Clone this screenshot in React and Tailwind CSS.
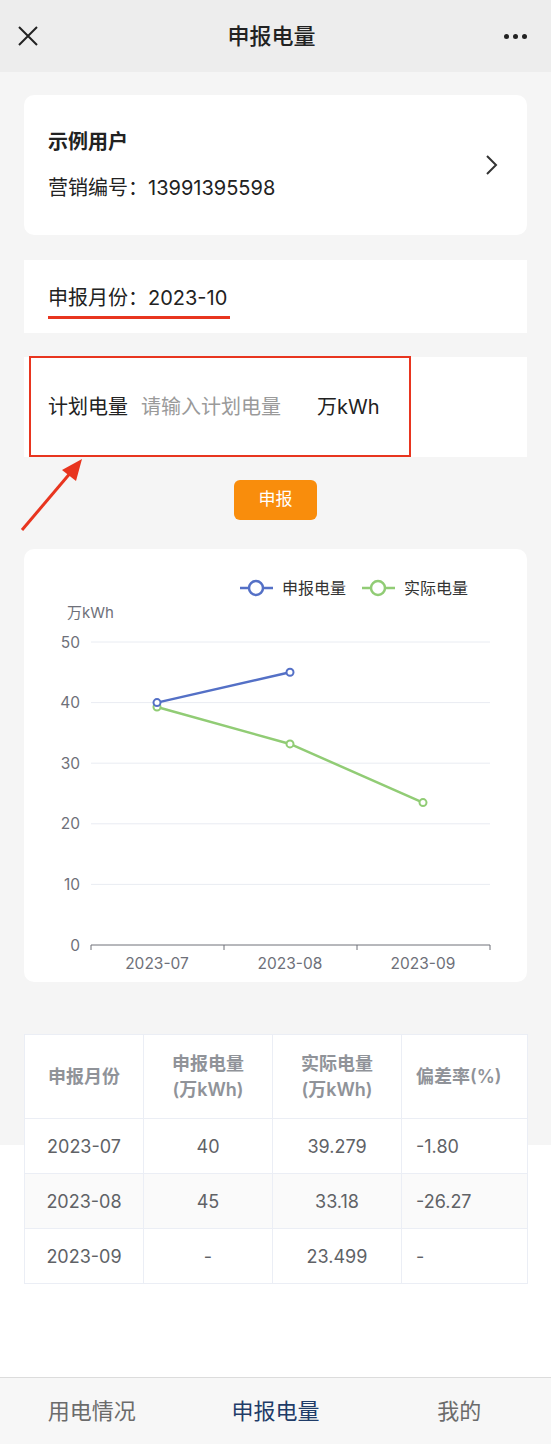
const font = "font-['Inter','Noto_Sans_CJK_SC',sans-serif]";

const rows = [
  { month: '2023-07', plan: '40', real: '39.279', rate: '-1.80' },
  { month: '2023-08', plan: '45', real: '33.18', rate: '-26.27' },
  { month: '2023-09', plan: '-', real: '23.499', rate: '-' },
];

const yOf = (v) => 396 - v * 6.06;
const xs = [133, 266, 399];
const planData = [40, 45];
const realData = [39.279, 33.18, 23.499];

const Chart = () => (
  <svg width="503" height="433" viewBox="0 0 503 433" className="block">
    {/* legend */}
    <line x1="216" y1="39" x2="249" y2="39" stroke="#5470c6" strokeWidth="2.5" />
    <circle cx="232" cy="39" r="7" fill="#fff" stroke="#5470c6" strokeWidth="2.5" />
    <text x="258" y="45" fontSize="16" fill="#333">申报电量</text>
    <line x1="338" y1="39" x2="371" y2="39" stroke="#91cc75" strokeWidth="2.5" />
    <circle cx="354" cy="39" r="7" fill="#fff" stroke="#91cc75" strokeWidth="2.5" />
    <text x="380" y="45" fontSize="16" fill="#333">实际电量</text>

    <text x="43" y="69" fontSize="15" fill="#6e7079">万kWh</text>

    {[50, 40, 30, 20, 10, 0].map((v) => (
      <g key={v}>
        <text x="56" y={yOf(v) + 5.5} fontSize="15.5" fill="#6e7079" textAnchor="end">{v}</text>
        {v > 0 && <line x1="67" y1={yOf(v)} x2="466" y2={yOf(v)} stroke="#e9ecf2" strokeWidth="1" />}
      </g>
    ))}

    <line x1="67" y1="396" x2="466" y2="396" stroke="#6e7079" strokeWidth="1" />
    {[67, 200, 333, 466].map((x) => (
      <line key={x} x1={x} y1="396" x2={x} y2="401" stroke="#6e7079" strokeWidth="1" />
    ))}
    {['2023-07', '2023-08', '2023-09'].map((m, i) => (
      <text key={m} x={xs[i]} y="420" fontSize="15.5" fill="#6e7079" textAnchor="middle">{m}</text>
    ))}

    <polyline points={realData.map((v, i) => `${xs[i]},${yOf(v)}`).join(' ')} fill="none" stroke="#91cc75" strokeWidth="2.5" />
    <polyline points={planData.map((v, i) => `${xs[i]},${yOf(v)}`).join(' ')} fill="none" stroke="#5470c6" strokeWidth="2.5" />
    {realData.map((v, i) => (
      <circle key={'r' + i} cx={xs[i]} cy={yOf(v)} r="3.5" fill="#fff" stroke="#91cc75" strokeWidth="2" />
    ))}
    {planData.map((v, i) => (
      <circle key={'p' + i} cx={xs[i]} cy={yOf(v)} r="3.5" fill="#fff" stroke="#5470c6" strokeWidth="2" />
    ))}
  </svg>
);

const App = () => {
  return (
    <div className={`${font} relative w-[551px] min-h-screen flex flex-col bg-white text-[#222]`}>
      {/* top bar */}
      <div className="h-[72px] bg-[#ededed] flex items-center justify-between pl-[17px] pr-[24px]">
        <svg width="22" height="22" viewBox="0 0 22 22">
          <path d="M2 2L20 20M20 2L2 20" stroke="#222" strokeWidth="2" />
        </svg>
        <span className="text-[22px] font-medium leading-none">申报电量</span>
        <div className="flex gap-[4px]">
          <span className="w-[5px] h-[5px] rounded-full bg-[#222]" />
          <span className="w-[5px] h-[5px] rounded-full bg-[#222]" />
          <span className="w-[5px] h-[5px] rounded-full bg-[#222]" />
        </div>
      </div>

      <div className="flex-1 px-[24px] pt-[23px] pb-[93px] bg-[linear-gradient(to_bottom,#f5f5f5_1073px,#ffffff_1073px)]">
        {/* user card */}
        <div className="h-[140px] bg-white rounded-[10px] pl-[24px] pr-[28px] flex items-center justify-between">
          <div>
            <div className="text-[20px] font-bold leading-[28px]">示例用户</div>
            <div className="text-[20px] leading-[28px] mt-[18px]">营销编号：13991395598</div>
          </div>
          <svg width="14" height="22" viewBox="0 0 14 22">
            <path d="M2 2L11 11L2 20" fill="none" stroke="#333" strokeWidth="2" />
          </svg>
        </div>

        {/* month */}
        <div className="mt-[25px] h-[73px] bg-white pl-[24px] pt-[24px]">
          <span className="inline-block text-[20px] leading-[28px] pb-[4px] pr-[3px] border-b-[3px] border-[#e8351f]">
            申报月份：2023-10
          </span>
        </div>

        {/* plan input */}
        <div className="relative mt-[24px] h-[100px] bg-white pl-[24px] flex items-center text-[20px]">
          <span>计划电量</span>
          <input
            className="ml-[13px] w-[163px] bg-transparent outline-none placeholder:text-[#9a9a9a]"
            placeholder="请输入计划电量"
          />
          <span className="ml-[13px]">万kWh</span>
          <div className="absolute left-[5px] top-[-1px] w-[382px] h-[101px] border-[2px] border-[#e8351f]" />
        </div>

        <div className="mt-[23px] flex justify-center">
          <button className="w-[83px] h-[40px] rounded-[6px] bg-[#f98d0c] text-white text-[17px]">申报</button>
        </div>

        {/* chart */}
        <div className="mt-[29px] bg-white rounded-[10px] h-[433px]">
          <Chart />
        </div>

        {/* table */}
        <div className="mt-[52px] w-[504px] border border-[#ebeef5] bg-white">
          <div className="grid grid-cols-[119px_129px_129px_125px] h-[83px] text-[18px] font-semibold text-[#909399] leading-[26px]">
            <div className="flex items-center justify-center border-r border-[#ebeef5]">申报月份</div>
            <div className="flex flex-col items-center justify-center border-r border-[#ebeef5]">
              <span>申报电量</span>
              <span>(万kWh)</span>
            </div>
            <div className="flex flex-col items-center justify-center border-r border-[#ebeef5]">
              <span>实际电量</span>
              <span>(万kWh)</span>
            </div>
            <div className="flex items-center pl-[14px]">偏差率(%)</div>
          </div>
          {rows.map((r, i) => (
            <div
              key={r.month}
              className={`grid grid-cols-[119px_129px_129px_125px] h-[55px] border-t border-[#ebeef5] text-[18px] text-[#606266] ${i === 1 ? 'bg-[#fafafa]' : 'bg-white'}`}
            >
              <div className="flex items-center justify-center border-r border-[#ebeef5]">{r.month}</div>
              <div className="flex items-center justify-center border-r border-[#ebeef5]">{r.plan}</div>
              <div className="flex items-center justify-center border-r border-[#ebeef5]">{r.real}</div>
              <div className="flex items-center pl-[14px]">{r.rate}</div>
            </div>
          ))}
        </div>
      </div>

      {/* tab bar */}
      <div className="h-[68px] bg-[#f7f7f7] border-t border-[#dcdcdc] grid grid-cols-3 items-center text-center text-[22px]">
        <span className="text-[#6b6b6b]">用电情况</span>
        <span className="text-[#1f3c68]">申报电量</span>
        <span className="text-[#6b6b6b]">我的</span>
      </div>

      {/* annotation arrow */}
      <svg className="absolute left-0 top-0 pointer-events-none" width="120" height="560" viewBox="0 0 120 560">
        <line x1="22" y1="530" x2="72" y2="471" stroke="#e8351f" strokeWidth="3" />
        <polygon points="82,459 62,470 76,481" fill="#e8351f" />
      </svg>
    </div>
  );
};

export default App;
